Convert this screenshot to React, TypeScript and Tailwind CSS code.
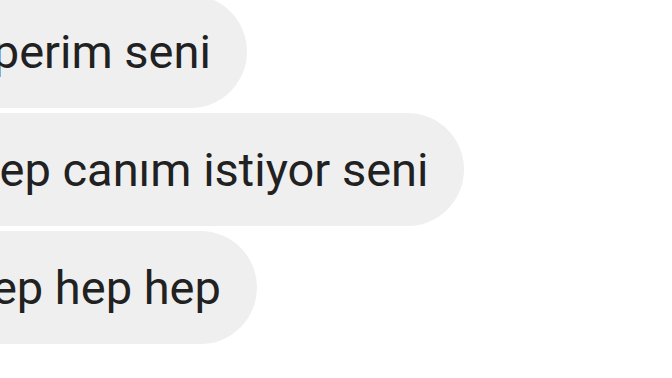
const MESSAGES = ['öperim seni', 'Hep canım istiyor seni', 'hep hep hep']

export default function App() {
  return (
    <div className="w-[672px] h-[378px] overflow-hidden bg-white font-['Roboto',sans-serif]">
      <div className="-ml-[70px] -mt-[5px] flex flex-col items-start gap-[5px]">
        {MESSAGES.map((text) => (
          <div
            key={text}
            className="h-[113px] flex items-center rounded-[57px] bg-[#efefef] pl-[36px] pr-[36px] text-[47px] leading-none text-[#212121] whitespace-nowrap"
          >
            {text}
          </div>
        ))}
      </div>
    </div>
  )
}
